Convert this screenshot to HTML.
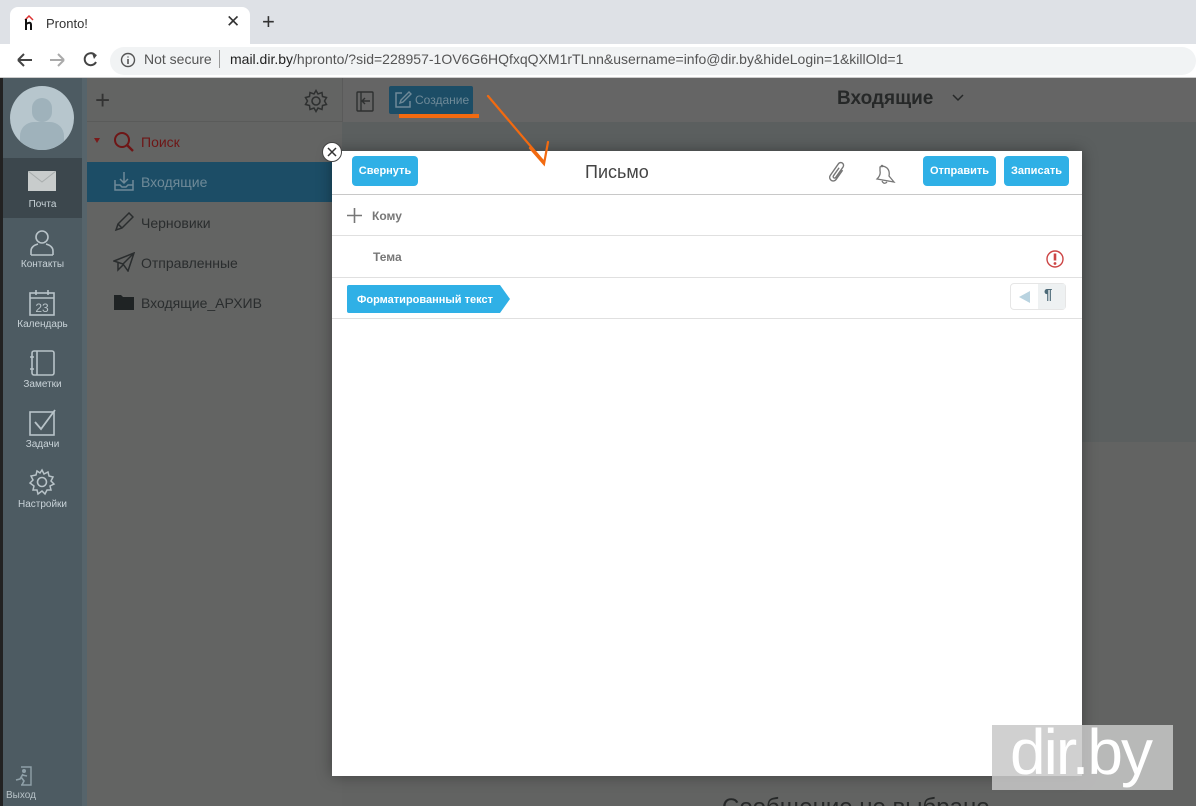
<!DOCTYPE html>
<html style="width:1196px;height:806px;overflow:hidden"><head><meta charset="utf-8">
<style>
*{box-sizing:border-box;margin:0;padding:0}
html,body{width:1196px;height:806px;overflow:hidden}
body{position:relative;font-family:"Liberation Sans",sans-serif;background:#626362}
.abs{position:absolute}
.tabbar{left:0;top:0;width:1196px;height:44px;background:#dee1e6}
.tab{left:10px;top:7px;width:240px;height:37px;background:#fff;border-radius:8px 8px 0 0}
.addr{left:0;top:44px;width:1196px;height:34px;background:#fff;border-bottom:1px solid #ccc}
.omni{left:110px;top:47px;width:1086px;height:28px;background:#f1f3f4;border-radius:14px}
.nav{left:3px;top:78px;width:79px;height:728px;background:#4d5b62}
.navsep{left:82px;top:78px;width:5px;height:728px;background:#56646b}
.folders{left:87px;top:78px;width:255px;height:728px;background:#636463}
.main{left:342px;top:78px;width:854px;height:728px;background:#626362}
.navitem{position:absolute;left:3px;width:79px;text-align:center;color:#c9d3d8;font-size:10px}
.btn{position:absolute;background:#2fb0e6;color:#fff;font-size:11px;border-radius:4px;text-align:center;font-weight:bold}
.fi{position:absolute;left:141px;font-size:14px;color:#2a2d2e}
</style></head><body>
<div class="abs" style="left:0;top:0;width:3px;height:806px;background:#222"></div>
<div class="abs tabbar"></div>
<div class="abs tab"></div>
<svg class="abs" style="left:22px;top:15px" width="14" height="16"><path d="M3 5 L7 1 L11 5" stroke="#d33" stroke-width="1.5" fill="none"/><path d="M4 4 V15 M4 9 Q9 6 9 10 V15" stroke="#111" stroke-width="2" fill="none"/></svg>
<div class="abs" style="left:46px;top:16px;font-size:13px;color:#333">Pronto!</div>
<div class="abs" style="left:226px;top:12px;font-size:17px;color:#333">✕</div>
<div class="abs" style="left:262px;top:9px;font-size:22px;color:#333">+</div>
<div class="abs addr"></div>
<div class="abs omni"></div>
<svg class="abs" style="left:12px;top:50px" width="90" height="20"><path d="M6 10 H20 M6 10 L12 4 M6 10 L12 16" stroke="#444" stroke-width="2" fill="none"/><path d="M38 10 H52 M52 10 L46 4 M52 10 L46 16" stroke="#aaa" stroke-width="2" fill="none"/><path d="M83 5 A6 6 0 1 0 84 12" stroke="#444" stroke-width="2" fill="none"/><path d="M80 3 L85 5 L82 9" fill="#444"/></svg>
<svg class="abs" style="left:120px;top:52px" width="16" height="16"><circle cx="8" cy="8" r="6.5" stroke="#555" stroke-width="1.4" fill="none"/><path d="M8 7 V12 M8 4.5 V5.5" stroke="#555" stroke-width="1.6"/></svg>
<div class="abs" style="left:144px;top:51px;font-size:14px;color:#555">Not secure</div>
<div class="abs" style="left:219px;top:50px;width:1px;height:18px;background:#999"></div>
<div class="abs" style="left:230px;top:51px;font-size:14px;color:#555"><span style="color:#222">mail.dir.by</span>/hpronto/?sid=228957-1OV6G6HQfxqQXM1rTLnn&amp;username=info@dir.by&amp;hideLogin=1&amp;killOld=1</div>

<div class="abs nav"></div>
<div class="abs navsep"></div>
<div class="abs folders"></div>
<div class="abs main"></div>
<div class="abs" style="left:342px;top:78px;width:854px;height:44px;background:#656565"></div>
<div class="abs" style="left:342px;top:122px;width:854px;height:320px;background:#5b5f5f"></div>
<div class="abs" style="left:87px;top:78px;width:255px;height:44px;border-bottom:1px solid #5a5b5a"></div>

<div class="abs" style="left:10px;top:86px;width:64px;height:64px;border-radius:50%;background:#b7c6cd;overflow:hidden">
<div style="position:absolute;left:22px;top:12px;width:20px;height:24px;border-radius:10px;background:#9fb2bb"></div>
<div style="position:absolute;left:10px;top:36px;width:44px;height:30px;border-radius:14px 14px 0 0;background:#9fb2bb"></div></div>
<div class="abs" style="left:3px;top:158px;width:79px;height:60px;background:#3c474d"></div>
<svg class="abs" style="left:28px;top:171px" width="28" height="20"><rect x="0" y="0" width="28" height="20" fill="#c8cccc"/><path d="M0 0 L14 11 L28 0" stroke="#a8adad" fill="none"/></svg>
<div class="navitem" style="top:199px">Почта</div>
<svg class="abs" style="left:29px;top:229px" width="26" height="28"><circle cx="13" cy="8" r="6" stroke="#b8c3c8" stroke-width="1.6" fill="none"/><path d="M2 26 V22 Q2 17 9 15 M24 26 V22 Q24 17 17 15 M2 26 H24" stroke="#b8c3c8" stroke-width="1.6" fill="none"/></svg>
<div class="navitem" style="top:259px">Контакты</div>
<svg class="abs" style="left:29px;top:289px" width="26" height="28"><rect x="1" y="4" width="24" height="22" stroke="#b8c3c8" stroke-width="1.6" fill="none"/><path d="M1 9 H25 M7 1 V6 M19 1 V6" stroke="#b8c3c8" stroke-width="1.6"/><text x="13" y="23" font-size="12" fill="#b8c3c8" text-anchor="middle" font-family="Liberation Sans">23</text></svg>
<div class="navitem" style="top:319px">Календарь</div>
<svg class="abs" style="left:29px;top:350px" width="26" height="26"><rect x="3" y="1" width="22" height="24" rx="2" stroke="#b8c3c8" stroke-width="1.6" fill="none"/><path d="M8 1 V25 M1 7 H5 M1 19 H5" stroke="#b8c3c8" stroke-width="1.6"/></svg>
<div class="navitem" style="top:379px">Заметки</div>
<svg class="abs" style="left:29px;top:408px" width="28" height="28"><rect x="1" y="4" width="24" height="23" stroke="#b8c3c8" stroke-width="1.6" fill="none"/><path d="M6 14 L12 21 L26 2" stroke="#b8c3c8" stroke-width="1.8" fill="none"/></svg>
<div class="navitem" style="top:439px">Задачи</div>
<svg class="abs" style="left:28px;top:468px" width="28" height="28"><circle cx="14" cy="14" r="4.5" stroke="#b8c3c8" stroke-width="1.6" fill="none"/><path d="M14 2 L16 6 L20 4 L21 8 L25 9 L23 13 L26 16 L22 18 L23 22 L19 22 L17 26 L14 23 L10 26 L9 22 L5 22 L6 18 L2 15 L5 12 L3 8 L8 7 L9 3 L12 5 Z" stroke="#b8c3c8" stroke-width="1.5" fill="none"/></svg>
<div class="navitem" style="top:499px">Настройки</div>
<svg class="abs" style="left:13px;top:766px" width="20" height="20"><path d="M8 1 H18 V19 H8" stroke="#8fa0a8" stroke-width="1.4" fill="none"/><circle cx="11" cy="5" r="2" fill="#8fa0a8"/><path d="M10 8 L7 13 L3 14 M8 11 L11 15 L9 19 M9 9 L14 10" stroke="#8fa0a8" stroke-width="1.6" fill="none"/></svg>
<div class="abs" style="left:6px;top:790px;font-size:10px;color:#b8c3c8">Выход</div>

<div class="abs" style="left:95px;top:87px;font-size:26px;color:#333;line-height:26px;font-weight:300">+</div>
<svg class="abs" style="left:304px;top:89px" width="24" height="24"><circle cx="12" cy="12" r="4" stroke="#2e3030" stroke-width="1.6" fill="none"/><path d="M12 1.5 L14 5 L18 3.5 L18.5 7.5 L22.5 8.5 L20.5 12 L22.5 15.5 L18.5 16.5 L18 20.5 L14 19 L12 22.5 L10 19 L6 20.5 L5.5 16.5 L1.5 15.5 L3.5 12 L1.5 8.5 L5.5 7.5 L6 3.5 L10 5 Z" stroke="#2e3030" stroke-width="1.5" fill="none"/></svg>
<div class="abs" style="left:94px;top:138px;width:0;height:0;border-left:3px solid transparent;border-right:3px solid transparent;border-top:5px solid #7a1a1a"></div>
<svg class="abs" style="left:113px;top:131px" width="22" height="22"><circle cx="9" cy="9" r="7" stroke="#6e1616" stroke-width="2" fill="none"/><path d="M14 14 L20 20" stroke="#6e1616" stroke-width="2.4"/></svg>
<div class="fi" style="top:134px;color:#6e1616">Поиск</div>
<div class="abs" style="left:87px;top:162px;width:255px;height:40px;background:#1c4d66"></div>
<svg class="abs" style="left:114px;top:171px" width="20" height="20"><path d="M1 9 V19 H19 V9" stroke="#6f8a98" stroke-width="1.5" fill="none"/><path d="M10 1 V12 M6 8 L10 12 L14 8 M1 14 H6 L8 16 H12 L14 14 H19" stroke="#6f8a98" stroke-width="1.5" fill="none"/></svg>
<div class="fi" style="top:174px;color:#6f8a98">Входящие</div>
<svg class="abs" style="left:114px;top:212px" width="20" height="20"><path d="M2 18 L4 12 L15 1 L19 5 L8 16 Z M4 12 L8 16" stroke="#2a2d2e" stroke-width="1.5" fill="none"/></svg>
<div class="fi" style="top:215px">Черновики</div>
<svg class="abs" style="left:113px;top:252px" width="22" height="20"><path d="M1 9 L21 1 L15 19 L10 12 Z M10 12 L21 1 M5 11 L5 18 L10 13" stroke="#2a2d2e" stroke-width="1.5" fill="none"/></svg>
<div class="fi" style="top:255px">Отправленные</div>
<svg class="abs" style="left:114px;top:294px" width="20" height="16"><path d="M0 1 H7 L9 3 H20 V16 H0 Z" fill="#1f2324"/></svg>
<div class="fi" style="top:295px">Входящие_АРХИВ</div>

<div class="abs" style="left:342px;top:78px;width:1px;height:44px;background:#5a5a5a"></div>
<svg class="abs" style="left:356px;top:91px" width="20" height="22"><rect x="1" y="1" width="16" height="19" rx="1" stroke="#2e3030" stroke-width="1.4" fill="none"/><path d="M14 10 H6 M9 7 L6 10 L9 13 M5 1 V20" stroke="#2e3030" stroke-width="1.4" fill="none"/></svg>
<div class="abs" style="left:389px;top:86px;width:84px;height:28px;background:#1c4d66;border-radius:2px"></div>
<svg class="abs" style="left:394px;top:91px" width="18" height="18"><path d="M8 2 H2 V16 H16 V10" stroke="#6f8a98" stroke-width="1.5" fill="none"/><path d="M6 12 L7 9 L15 1 L17 3 L9 11 Z" stroke="#6f8a98" stroke-width="1.4" fill="none"/></svg>
<div class="abs" style="left:415px;top:93px;font-size:12px;color:#6f8a98">Создание</div>
<div class="abs" style="left:399px;top:114px;width:80px;height:4px;background:#f26a10"></div>
<div class="abs" style="left:837px;top:88px;font-size:19px;font-weight:bold;color:#262828">Входящие</div>
<svg class="abs" style="left:952px;top:94px" width="12" height="8"><path d="M1 1 L6 6 L11 1" stroke="#262828" stroke-width="1.5" fill="none"/></svg>

<div class="abs" style="left:722px;top:794px;font-size:24px;color:#262828;white-space:nowrap">Сообщение не выбрано</div>

<div class="abs" style="left:332px;top:151px;width:750px;height:625px;background:#fff;box-shadow:0 0 14px rgba(0,0,0,.35)"></div>
<div class="abs" style="left:322px;top:142px;width:20px;height:20px;border-radius:50%;background:#fff;border:1.5px solid #444"></div>
<svg class="abs" style="left:325px;top:145px" width="14" height="14"><path d="M3 3 L11 11 M11 3 L3 11" stroke="#333" stroke-width="1.5"/></svg>
<div class="btn" style="left:352px;top:156px;width:66px;height:30px;line-height:30px">Свернуть</div>
<div class="abs" style="left:585px;top:162px;font-size:18px;color:#444">Письмо</div>
<svg class="abs" style="left:827px;top:161px" width="22" height="24"><path d="M16 10 L8 18 A3.5 3.5 0 0 1 3 13 L13 3 A2.5 2.5 0 0 1 17 7 L8 16 A1.2 1.2 0 0 1 6 14 L13 7" stroke="#777" stroke-width="1.4" fill="none" transform="rotate(-10 11 12)"/></svg>
<svg class="abs" style="left:874px;top:163px" width="24" height="24"><path d="M6 4 Q9 2 13 5 Q16 8 15 13 L20 19 L3 16 Q7 12 6 8 Z M8 18 Q10 22 13 19" stroke="#777" stroke-width="1.3" fill="none"/><circle cx="8" cy="3" r="1.3" fill="#777"/></svg>
<div class="btn" style="left:923px;top:156px;width:73px;height:30px;line-height:30px">Отправить</div>
<div class="btn" style="left:1004px;top:156px;width:65px;height:30px;line-height:30px">Записать</div>
<div class="abs" style="left:332px;top:194px;width:750px;height:1px;background:#c8c8c8"></div>
<svg class="abs" style="left:346px;top:207px" width="17" height="17"><path d="M8.5 1 V16 M1 8.5 H16" stroke="#777" stroke-width="1.6"/></svg>
<div class="abs" style="left:372px;top:209px;font-size:12px;color:#777;font-weight:bold">Кому</div>
<div class="abs" style="left:332px;top:235px;width:750px;height:1px;background:#e0e0e0"></div>
<div class="abs" style="left:373px;top:250px;font-size:12px;color:#777;font-weight:bold">Тема</div>
<svg class="abs" style="left:1045px;top:249px" width="20" height="20"><circle cx="10" cy="10" r="8" stroke="#c44" stroke-width="1.4" fill="none"/><path d="M10 4.5 V11.5" stroke="#c44" stroke-width="2.6"/><circle cx="10" cy="14.5" r="1.4" fill="#c44"/></svg>
<div class="abs" style="left:332px;top:277px;width:750px;height:1px;background:#e0e0e0"></div>
<svg class="abs" style="left:347px;top:285px" width="164" height="28"><path d="M2 0 H153 L163 14 L153 28 H2 Q0 28 0 26 V2 Q0 0 2 0 Z" fill="#2fb0e6"/><text x="10" y="18" font-size="11" font-weight="bold" fill="#fff" font-family="Liberation Sans">Форматированный текст</text></svg>
<div class="abs" style="left:1010px;top:283px;width:56px;height:27px;border:1px solid #e6e6e6;border-radius:4px"></div>
<div class="abs" style="left:1038px;top:284px;width:27px;height:25px;background:#eef1f2"></div>
<svg class="abs" style="left:1018px;top:290px" width="14" height="14"><path d="M12 1 V13 L1 7 Z" fill="#b9d3e0"/></svg>
<div class="abs" style="left:1044px;top:286px;font-size:15px;font-weight:bold;color:#4d6a78">¶</div>
<div class="abs" style="left:332px;top:318px;width:750px;height:1px;background:#e0e0e0"></div>

<svg class="abs" style="left:480px;top:92px" width="80" height="80"><path d="M8 4 Q30 30 64 70 M50 56 L64 72 L68 50" stroke="#f26a10" stroke-width="2.2" fill="none" stroke-linecap="round"/></svg>

<div class="abs" style="left:992px;top:725px;width:181px;height:65px;background:rgba(200,200,200,.85)"></div>
<div class="abs" style="left:1010px;top:712px;font-size:64px;color:#fff;letter-spacing:-2px;line-height:80px">dir.by</div>
</body></html>
